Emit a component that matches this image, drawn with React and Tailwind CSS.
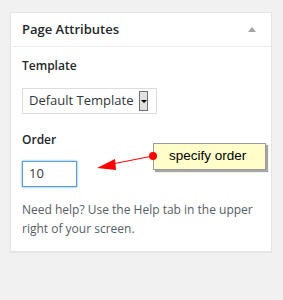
export default function App() {
  return (
    <div className="relative w-[283px] h-[300px] bg-[#f1f1f1] pt-[12px] pl-[10px] font-['Open_Sans',sans-serif]">
      <div className="w-[262px] bg-white border border-[#e5e5e5] shadow-[0_1px_1px_rgba(0,0,0,0.04)]">
        <div className="flex items-center justify-between h-[34px] pl-[11px] pr-[15px] border-b border-[#eeeeee]">
          <h2 className="text-[13px] font-semibold text-[#23282d]">Page Attributes</h2>
          <span className="block w-0 h-0 border-l-[4px] border-r-[4px] border-b-[5px] border-l-transparent border-r-transparent border-b-[#a0a5aa]" />
        </div>
        <div className="px-[11px] pt-[10px] pb-[13px]">
          <p className="text-[12px] leading-[18px] font-semibold text-[#23282d]">Template</p>
          <div className="mt-[13px] flex items-center w-[135px] h-[26px] border border-[#dddddd] pl-[6px] pr-[8px]">
            <span className="flex-1 whitespace-nowrap text-[13px] text-[#32373c]">Default Template</span>
            <span className="flex items-center justify-center w-[9px] h-[20px] border border-[#707070] bg-[#e1e1e1]">
              <span className="block w-0 h-0 border-l-[3px] border-r-[3px] border-t-[3px] border-l-transparent border-r-transparent border-t-black" />
            </span>
          </div>
          <p className="mt-[17px] text-[12px] leading-[18px] font-semibold text-[#23282d]">Order</p>
          <div className="mt-[12px] w-[55px] h-[26px] border border-[#5b9dd9] shadow-[0_0_2px_rgba(30,140,190,0.8)] pl-[6px] flex items-center text-[13px] text-[#32373c]">
            10
          </div>
          <p className="mt-[13px] text-[12px] leading-[19px] text-[#555d66]">
            Need help? Use the Help tab in the upper right of your screen.
          </p>
        </div>
      </div>

      <svg className="absolute left-0 top-0" width="283" height="300">
        <line x1="153" y1="156" x2="112" y2="164" stroke="#ff0000" strokeWidth="1" />
        <polygon points="97,168 115,159 116,170" fill="#ff0000" />
      </svg>
      <div className="absolute left-[153px] top-[143px] w-[113px] h-[27px] bg-[#ffffcc] border border-[#9a9a9a] shadow-[2px_2px_1px_rgba(0,0,0,0.35)] pl-[15px] flex items-center font-['Liberation_Sans',sans-serif] text-[13.5px] text-black">
        specify order
      </div>
      <div className="absolute left-[149px] top-[152px] w-[8px] h-[8px] rounded-full bg-[#ff0000]" />
    </div>
  );
}
